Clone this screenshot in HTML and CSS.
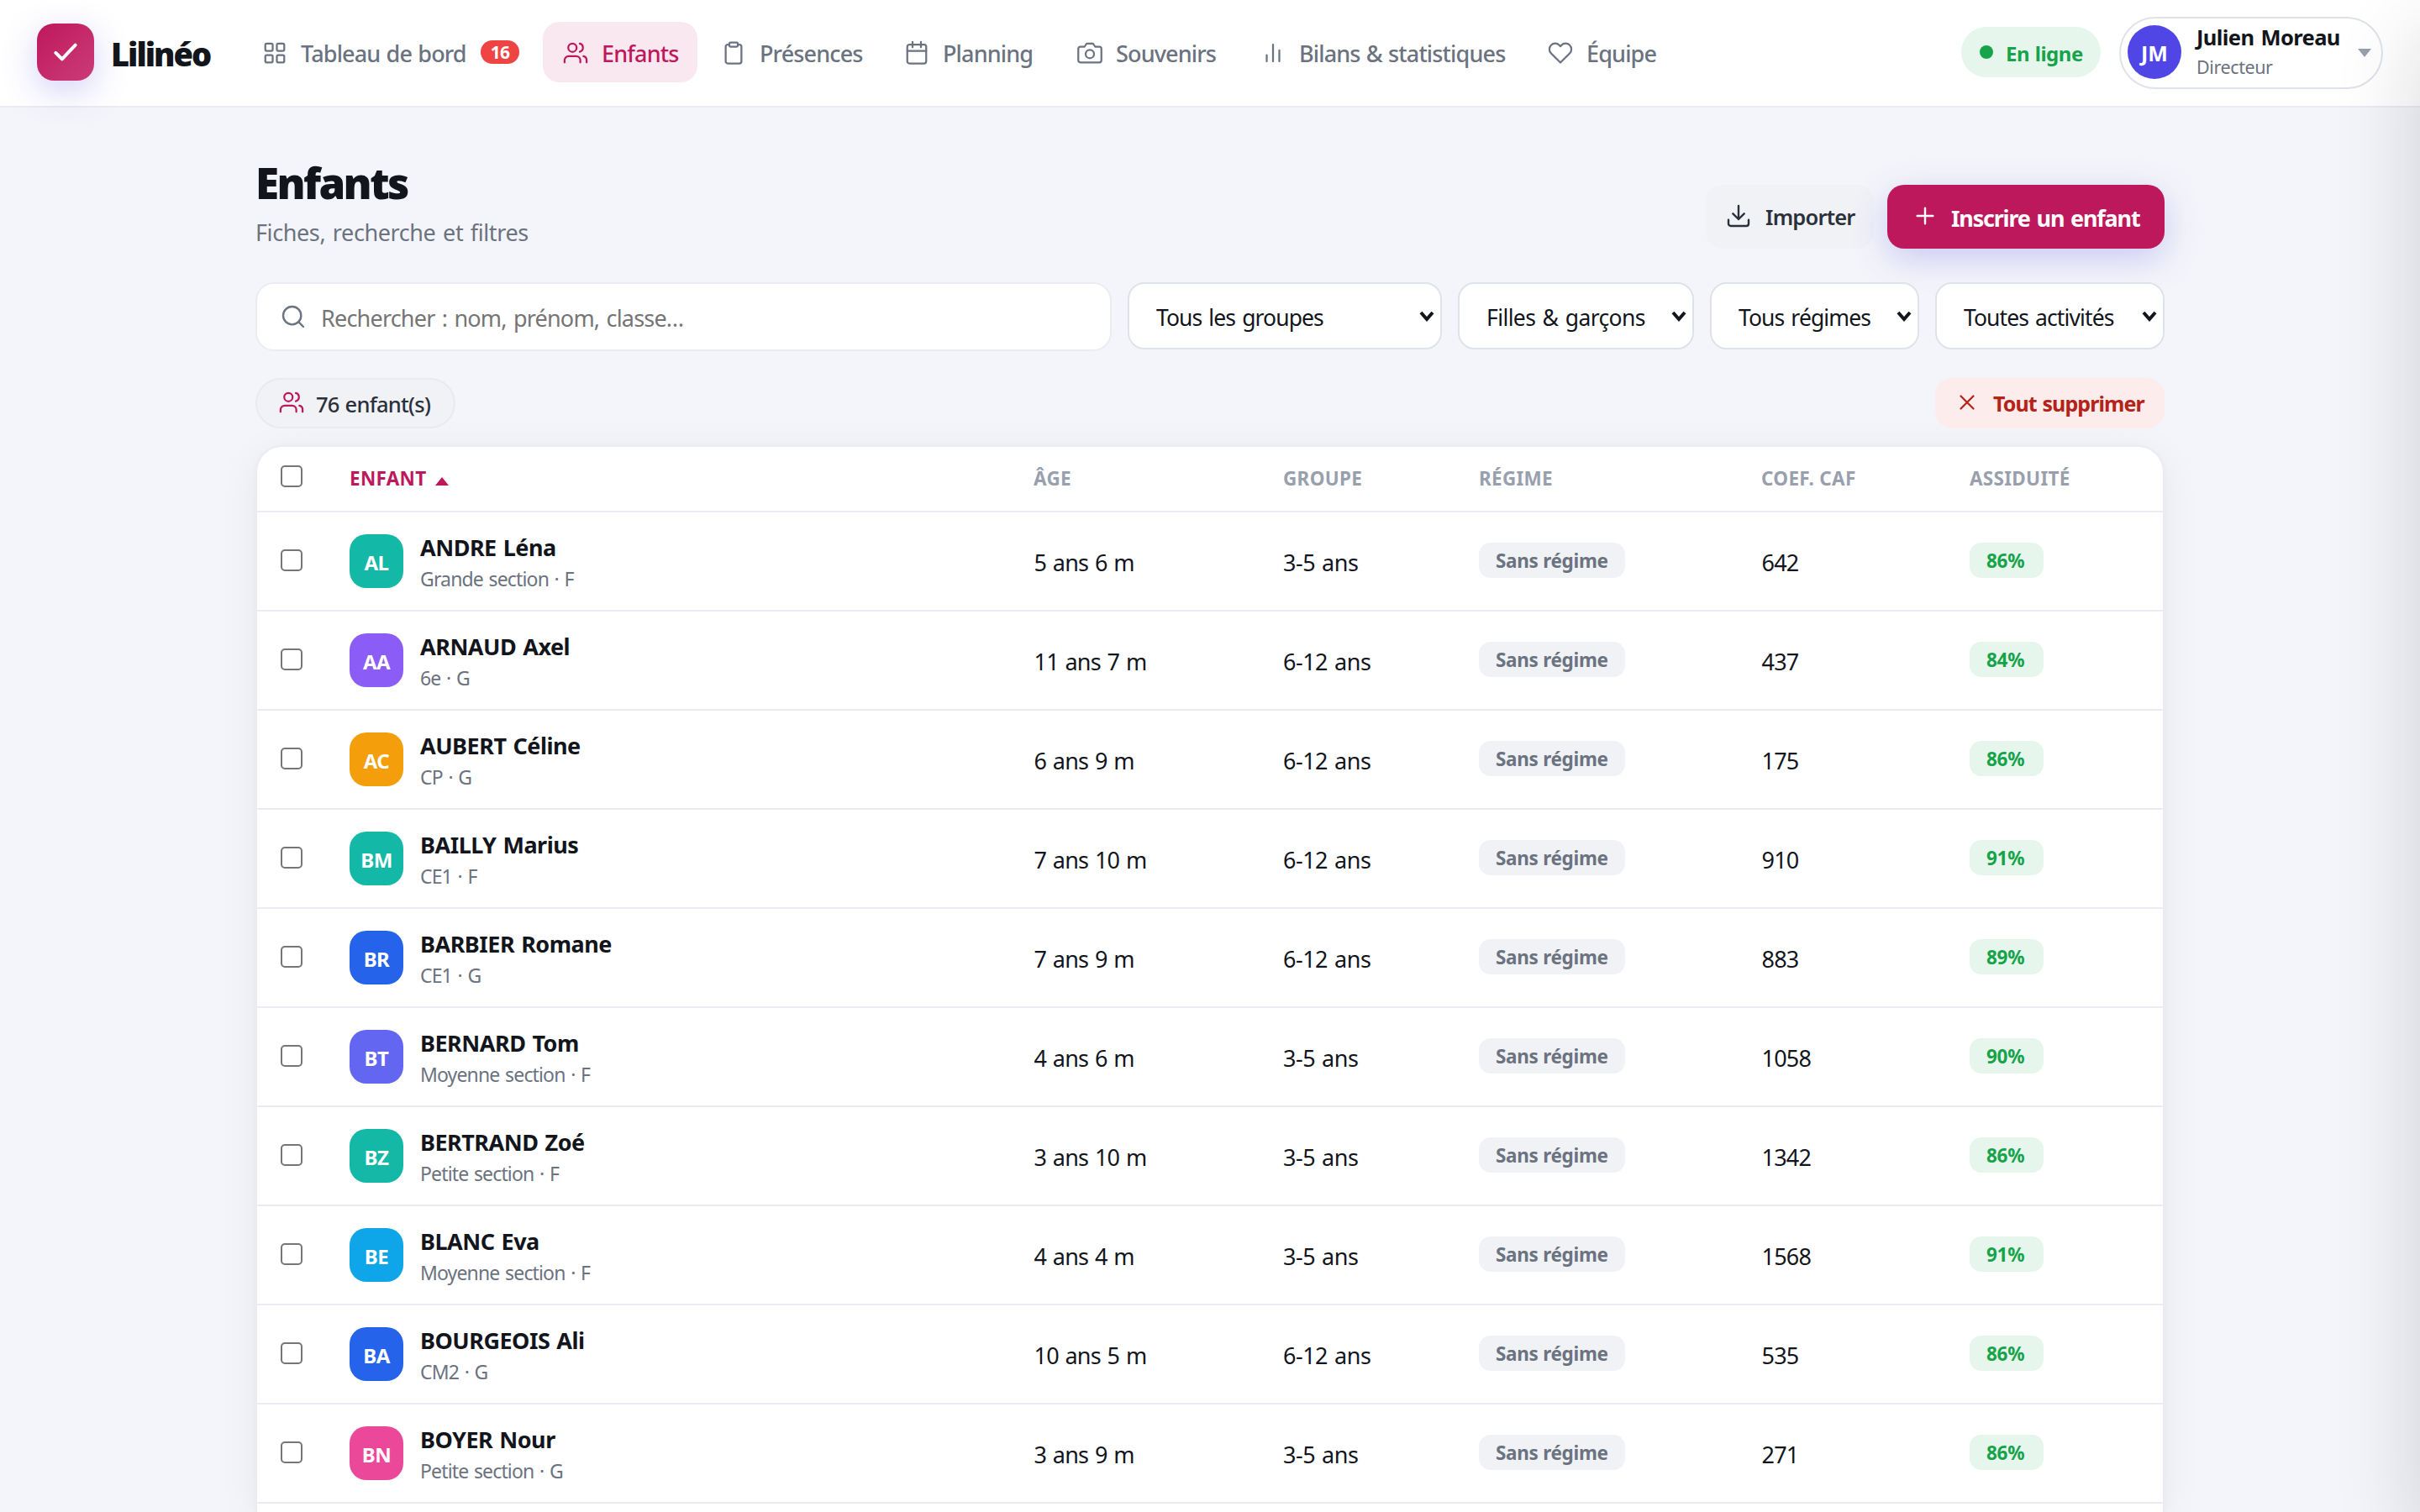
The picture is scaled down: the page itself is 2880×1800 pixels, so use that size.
FILE: index.html
```html
<!DOCTYPE html>
<html lang="fr">
<head>
<meta charset="utf-8">
<title>Lilinéo – Enfants</title>
<link rel="stylesheet" href="styles.css">
</head>
<body>
<svg class="sprite" aria-hidden="true">
  <symbol id="i-users" viewBox="0 0 24 24"><circle cx="9" cy="7" r="4"/><path d="M1.5 21v-2a4 4 0 0 1 4-4h7a4 4 0 0 1 4 4v2M22.5 21v-2a4 4 0 0 0-3-3.87M16 3.13a4 4 0 0 1 0 7.75"/></symbol>
</svg>
<header class="topbar">
  <div class="logo"><svg class="icon" viewBox="0 0 24 24"><path d="M5 12.5l4.5 4.5L19 7"/></svg></div>
  <div class="brand">Lilinéo</div>
  <nav class="nav">
    <a class="nav-item n1"><svg class="icon" viewBox="0 0 24 24"><rect x="3" y="3" width="7" height="7" rx="1.2"/><rect x="14" y="3" width="7" height="7" rx="1.2"/><rect x="3" y="14" width="7" height="7" rx="1.2"/><rect x="14" y="14" width="7" height="7" rx="1.2"/></svg><span>Tableau de bord</span><b class="badge">16</b></a>
    <a class="nav-item n2 active"><svg class="icon" viewBox="0 0 24 24"><use href="#i-users"/></svg><span>Enfants</span></a>
    <a class="nav-item n3"><svg class="icon" viewBox="0 0 24 24"><rect x="8" y="2" width="8" height="4" rx="1"/><path d="M16 4h1.500a2 2 0 0 1 2 2v14a2 2 0 0 1-2 2h-11a2 2 0 0 1-2-2V6a2 2 0 0 1 2-2H8"/></svg><span>Présences</span></a>
    <a class="nav-item n4"><svg class="icon" viewBox="0 0 24 24"><rect x="3" y="4" width="18" height="18" rx="2"/><path d="M8 1.500v5M16 1.500v5M3 10h18"/></svg><span>Planning</span></a>
    <a class="nav-item n5"><svg class="icon" viewBox="0 0 24 24"><path d="M23 19a2 2 0 0 1-2 2H3a2 2 0 0 1-2-2V8a2 2 0 0 1 2-2h4l2-3h6l2 3h4a2 2 0 0 1 2 2z"/><circle cx="12" cy="13" r="4"/></svg><span>Souvenirs</span></a>
    <a class="nav-item n6"><svg class="icon" viewBox="0 0 24 24"><path d="M12 20V4M18 20V9.500M6 20v-6"/></svg><span>Bilans &amp; statistiques</span></a>
    <a class="nav-item n7"><svg class="icon" viewBox="0 0 24 24"><path d="M20.840 4.610a5.500 5.500 0 0 0-7.780 0L12 5.670l-1.060-1.060a5.500 5.500 0 0 0-7.780 7.780L12 21.230l8.840-8.840a5.500 5.500 0 0 0 0-7.780z"/></svg><span>Équipe</span></a>
  </nav>
  <div class="status"><i class="dot"></i><span>En ligne</span></div>
  <div class="profile">
    <div class="profile-avatar">JM</div>
    <div class="profile-info"><div class="profile-name">Julien Moreau</div><div class="profile-role">Directeur</div></div>
    <i class="caret"></i>
  </div>
</header>

<main class="page">
  <section class="page-head">
    <div><h1>Enfants</h1><p class="subtitle">Fiches, recherche et filtres</p></div>
    <div class="actions">
      <button class="btn btn-soft"><svg class="icon" viewBox="0 0 24 24"><path d="M21 15.500V19a2 2 0 0 1-2 2H5a2 2 0 0 1-2-2v-3.500M7 10l5 5 5-5M12 15V3"/></svg><span>Importer</span></button>
      <button class="btn btn-primary"><svg class="icon" viewBox="0 0 24 24"><path d="M12 5v14M5 12h14"/></svg><span>Inscrire un enfant</span></button>
    </div>
  </section>

  <section class="filters">
    <div class="search"><svg class="icon" viewBox="0 0 24 24"><circle cx="11" cy="11" r="8"/><path d="M21 21l-4.350-4.350"/></svg><span>Rechercher : nom, prénom, classe…</span></div>
    <div class="select s1"><span>Tous les groupes</span><svg class="chevron" viewBox="0 0 18 14"><path d="M2 3l7 8 7-8"/></svg></div>
    <div class="select s2"><span>Filles &amp; garçons</span><svg class="chevron" viewBox="0 0 18 14"><path d="M2 3l7 8 7-8"/></svg></div>
    <div class="select s3"><span>Tous régimes</span><svg class="chevron" viewBox="0 0 18 14"><path d="M2 3l7 8 7-8"/></svg></div>
    <div class="select s4"><span>Toutes activités</span><svg class="chevron" viewBox="0 0 18 14"><path d="M2 3l7 8 7-8"/></svg></div>
  </section>

  <section class="summary">
    <div class="count"><svg class="icon" viewBox="0 0 24 24"><use href="#i-users"/></svg><span>76 enfant(s)</span></div>
    <button class="btn-danger"><svg class="icon" viewBox="0 0 24 24"><path d="M18 6L6 18M6 6l12 12"/></svg><span>Tout supprimer</span></button>
  </section>

  <section class="card">
    <table class="table">
      <colgroup><col class="c1"><col class="c2"><col class="c3"><col class="c4"><col class="c5"><col class="c6"><col class="c7"></colgroup>
      <thead><tr><th><i class="check"></i></th><th class="sorted">ENFANT<i class="sort"></i></th><th>ÂGE</th><th>GROUPE</th><th>RÉGIME</th><th>COEF. CAF</th><th>ASSIDUITÉ</th></tr></thead>
      <tbody>
        <tr><td><i class="check"></i></td><td><div class="child"><div class="avatar teal">AL</div><div><div class="name">ANDRE Léna</div><div class="meta">Grande section · F</div></div></div></td><td class="val">5 ans 6 m</td><td class="val">3-5 ans</td><td><span class="tag">Sans régime</span></td><td class="val">642</td><td><span class="tag good">86%</span></td></tr>
        <tr><td><i class="check"></i></td><td><div class="child"><div class="avatar violet">AA</div><div><div class="name">ARNAUD Axel</div><div class="meta">6e · G</div></div></div></td><td class="val">11 ans 7 m</td><td class="val">6-12 ans</td><td><span class="tag">Sans régime</span></td><td class="val">437</td><td><span class="tag good">84%</span></td></tr>
        <tr><td><i class="check"></i></td><td><div class="child"><div class="avatar amber">AC</div><div><div class="name">AUBERT Céline</div><div class="meta">CP · G</div></div></div></td><td class="val">6 ans 9 m</td><td class="val">6-12 ans</td><td><span class="tag">Sans régime</span></td><td class="val">175</td><td><span class="tag good">86%</span></td></tr>
        <tr><td><i class="check"></i></td><td><div class="child"><div class="avatar teal">BM</div><div><div class="name">BAILLY Marius</div><div class="meta">CE1 · F</div></div></div></td><td class="val">7 ans 10 m</td><td class="val">6-12 ans</td><td><span class="tag">Sans régime</span></td><td class="val">910</td><td><span class="tag good">91%</span></td></tr>
        <tr><td><i class="check"></i></td><td><div class="child"><div class="avatar blue">BR</div><div><div class="name">BARBIER Romane</div><div class="meta">CE1 · G</div></div></div></td><td class="val">7 ans 9 m</td><td class="val">6-12 ans</td><td><span class="tag">Sans régime</span></td><td class="val">883</td><td><span class="tag good">89%</span></td></tr>
        <tr><td><i class="check"></i></td><td><div class="child"><div class="avatar indigo">BT</div><div><div class="name">BERNARD Tom</div><div class="meta">Moyenne section · F</div></div></div></td><td class="val">4 ans 6 m</td><td class="val">3-5 ans</td><td><span class="tag">Sans régime</span></td><td class="val">1058</td><td><span class="tag good">90%</span></td></tr>
        <tr><td><i class="check"></i></td><td><div class="child"><div class="avatar teal">BZ</div><div><div class="name">BERTRAND Zoé</div><div class="meta">Petite section · F</div></div></div></td><td class="val">3 ans 10 m</td><td class="val">3-5 ans</td><td><span class="tag">Sans régime</span></td><td class="val">1342</td><td><span class="tag good">86%</span></td></tr>
        <tr><td><i class="check"></i></td><td><div class="child"><div class="avatar sky">BE</div><div><div class="name">BLANC Eva</div><div class="meta">Moyenne section · F</div></div></div></td><td class="val">4 ans 4 m</td><td class="val">3-5 ans</td><td><span class="tag">Sans régime</span></td><td class="val">1568</td><td><span class="tag good">91%</span></td></tr>
        <tr><td><i class="check"></i></td><td><div class="child"><div class="avatar blue">BA</div><div><div class="name">BOURGEOIS Ali</div><div class="meta">CM2 · G</div></div></div></td><td class="val">10 ans 5 m</td><td class="val">6-12 ans</td><td><span class="tag">Sans régime</span></td><td class="val">535</td><td><span class="tag good">86%</span></td></tr>
        <tr><td><i class="check"></i></td><td><div class="child"><div class="avatar pink">BN</div><div><div class="name">BOYER Nour</div><div class="meta">Petite section · G</div></div></div></td><td class="val">3 ans 9 m</td><td class="val">3-5 ans</td><td><span class="tag">Sans régime</span></td><td class="val">271</td><td><span class="tag good">86%</span></td></tr>
      </tbody>
    </table>
  </section>
</main>
<aside class="drawer"></aside>
</body>
</html>
```
FILE: styles.css
```css
* { box-sizing: border-box; }
body {
  margin: 0;
  height: 1800px;
  overflow: hidden;
  background: #f4f5fa;
  color: #12151c;
  font-family: "Noto Sans", "Open Sans", sans-serif;
  font-size: 27px;
}
h1, p { margin: 0; }
button { border: 0; font-family: inherit; padding: 0; }
i { font-style: normal; }
.sprite { display: none; }
.icon {
  flex: none;
  width: 30px;
  height: 30px;
  fill: none;
  stroke: currentColor;
  stroke-width: 1.8;
  stroke-linecap: round;
  stroke-linejoin: round;
}

/* Top bar */
.topbar {
  display: flex;
  align-items: center;
  height: 128px;
  padding: 0 44px;
  background: #fff;
  border-bottom: 2px solid #ebecf1;
}
.logo {
  display: flex;
  align-items: center;
  justify-content: center;
  flex: none;
  width: 68px;
  height: 68px;
  margin-top: -2px;
  border-radius: 20px;
  color: #fff;
  background: linear-gradient(135deg, #be185d, #cb3c77);
  box-shadow: 0 12px 40px rgba(79, 70, 229, .25);
}
.logo .icon { width: 40px; height: 40px; stroke-width: 2.4; }
.brand {
  width: 156px;
  margin-left: 20px;
  font-size: 38px;
  font-weight: 900;
  line-height: 50px;
  padding-top: 1px;
  letter-spacing: -2px;
}
.nav { display: flex; flex: 1; margin-top: -2px; }
.nav-item {
  display: flex;
  align-items: center;
  flex: none;
  height: 72px;
  padding-left: 24px;
  border-radius: 20px;
  color: #6b7280;
  font-weight: 500;
  letter-spacing: -.85px;
  word-spacing: 1px;
  white-space: nowrap;
}
.nav-item .icon { margin-top: 2px; }
.nav-item span { margin-left: 16px; padding-top: 3px; }
.n1 { width: 354px; margin-right: 4px; }
.n2 { width: 184px; margin-right: 4px; }
.n3 { width: 218px; }
.n4 { width: 206px; }
.n5 { width: 218px; }
.n6 { width: 342px; }
.nav-item.active { color: #be185d; background: #f9e8ef; }
.badge {
  width: 46px;
  height: 28px;
  margin-left: auto;
  margin-right: 24px;
  border-radius: 14px;
  background: #ef4444;
  color: #fff;
  font-size: 21px;
  line-height: 28px;
  letter-spacing: -.8px;
  text-align: center;
}
.status {
  display: flex;
  align-items: center;
  width: 166px;
  height: 60px;
  margin: -2px 22px 0 0;
  padding-left: 22px;
  border-radius: 30px;
  background: #e6f6ed;
  color: #16a34a;
  font-size: 24px;
  font-weight: 700;
  letter-spacing: -.5px;
  word-spacing: 1px;
}
.status span { padding-top: 2px; }
.dot { width: 16px; height: 16px; margin-right: 15px; border-radius: 50%; background: #16a34a; }
.profile {
  display: flex;
  align-items: center;
  width: 314px;
  height: 86px;
  padding: 0 12px 0 8px;
  border: 2px solid #dfe2e8;
  border-radius: 43px;
}
.profile-avatar {
  width: 64px;
  height: 64px;
  margin-top: -2px;
  border-radius: 50%;
  background: #4f46e5;
  color: #fff;
  font-size: 25px;
  font-weight: 700;
  line-height: 67px;
  text-align: center;
}
.profile-info { flex: 1; margin: -2px 0 0 18px; line-height: 35px; white-space: nowrap; }
.profile-name { font-size: 25.5px; font-weight: 700; letter-spacing: -.6px; word-spacing: 2px; }
.profile-role { color: #6b7280; font-size: 21.500px; letter-spacing: -.4px; }
.caret { border: 8px solid transparent; border-top: 10px solid #98a0ae; border-bottom: 0; }

/* Page heading */
.page { width: 2272px; margin: 0 auto; padding-top: 56px; }
.page-head { display: flex; justify-content: space-between; align-items: flex-end; height: 112px; }
h1 { font-size: 51px; font-weight: 900; line-height: 64px; letter-spacing: -2.6px; }
.subtitle { margin-top: 8px; color: #6b7280; line-height: 39px; letter-spacing: -.4px; word-spacing: 2px; }
.actions { display: flex; gap: 16px; }
.btn { display: flex; align-items: center; height: 76px; border-radius: 20px; }
.btn .icon { width: 32px; height: 32px; margin-top: -2px; }
.btn-soft { width: 200px; padding-left: 23px; background: #f1f2f6; color: #2a303c; font-size: 25.500px; font-weight: 600; letter-spacing: -.8px; }
.btn-soft span { margin-left: 16px; }
.btn-primary {
  width: 330px;
  padding-left: 29px;
  background: #be185d;
  color: #fff;
  font-size: 27px;
  font-weight: 700;
  letter-spacing: -1.2px;
  word-spacing: 2px;
  box-shadow: 0 12px 40px rgba(79, 70, 229, .25);
}
.btn-primary span { margin: 3px 0 0 15px; }

/* Filters */
.filters { display: flex; gap: 19px; height: 82px; margin-top: 40px; }
.search {
  display: flex;
  align-items: center;
  flex: 1;
  padding-left: 27px;
  border: 2px solid #eaecf1;
  border-radius: 22px;
  background: #fff;
  color: #757575;
  letter-spacing: -.8px;
  word-spacing: 2px;
}
.search .icon { width: 32px; height: 32px; color: #6b7280; }
.search span { margin-left: 17px; padding-top: 2px; }
.select {
  display: flex;
  align-items: center;
  justify-content: space-between;
  height: 80px;
  padding: 0 7px 0 32px;
  border: 2px solid #dfe2e8;
  border-radius: 20px;
  background: #fff;
  font-size: 26.500px;
  letter-spacing: -.9px;
  word-spacing: 2px;
  white-space: nowrap;
}
.select span { padding-top: 4px; }
.s1 { width: 374px; }
.s2 { width: 281px; letter-spacing: -.6px; }
.s3 { width: 249px; }
.s4 { width: 273px; }
.chevron { width: 18px; height: 14px; fill: none; stroke: #12151c; stroke-width: 4; }

/* Count and bulk delete */
.summary { display: flex; justify-content: space-between; height: 60px; margin: 32px 0 20px; }
.count {
  display: flex;
  align-items: center;
  width: 238px;
  padding-left: 26px;
  border: 2px solid #e9eaee;
  border-radius: 30px;
  background: #f1f2f5;
  color: #2a303c;
  font-size: 25.500px;
  font-weight: 500;
  letter-spacing: -.75px;
  word-spacing: 1px;
}
.count .icon { color: #be185d; margin-top: -3px; }
.count span { margin-left: 14px; padding-top: 1px; }
.btn-danger {
  display: flex;
  align-items: center;
  width: 273px;
  padding-left: 23px;
  border-radius: 20px;
  background: #fdecec;
  color: #b42318;
  font-size: 25px;
  font-weight: 700;
  letter-spacing: -.9px;
  word-spacing: 1px;
}
.btn-danger .icon { margin-top: -2px; }
.btn-danger span { margin: 0 0 0 16px; }

/* Children table */
.card {
  height: 1270px;
  overflow: hidden;
  border: 2px solid #ebecf1;
  border-bottom: 0;
  border-radius: 32px 32px 0 0;
  background: #fff;
  box-shadow: 0 8px 48px rgba(17, 24, 39, .06), 0 2px 6px rgba(17, 24, 39, .03);
}
.table { width: 2268px; table-layout: fixed; border-collapse: separate; border-spacing: 0; }
.c1 { width: 82px; }
.c2 { width: 814px; }
.c3 { width: 297px; }
.c4 { width: 233px; }
.c5 { width: 336px; }
.c6 { width: 248px; }
.c7 { width: 258px; }
th, td { padding: 0 0 0 28px; border-bottom: 2px solid #ebecf1; text-align: left; vertical-align: middle; white-space: nowrap; }
th { height: 78px; padding-bottom: 1px; color: #98a0ae; font-size: 22.500px; font-weight: 700; letter-spacing: .3px; }
td { height: 118px; }
.sorted { color: #be185d; }
.sort { display: inline-block; margin-left: 11px; border: 8px solid transparent; border-bottom: 10px solid #be185d; border-top: 0; }
.check { display: block; width: 26px; height: 26px; margin-top: -3px; border: 2px solid #767676; border-radius: 5px; }
th .check { margin-top: -5px; }
.child { display: flex; align-items: center; gap: 20px; }
.avatar {
  width: 64px;
  height: 64px;
  border-radius: 20px;
  color: #fff;
  font-size: 24px;
  font-weight: 700;
  line-height: 67px;
  letter-spacing: -.5px;
  text-align: center;
}
.name { padding-top: 4px; font-weight: 700; line-height: 38px; letter-spacing: -.5px; word-spacing: 1.5px; }
.meta { color: #6b7280; font-size: 23px; line-height: 36px; letter-spacing: -.85px; word-spacing: 1.5px; }
.val { padding-top: 3px; padding-left: 28.500px; letter-spacing: -.8px; word-spacing: 1.5px; }
.val:nth-child(4) { padding-left: 28px; letter-spacing: -.5px; }
.tag {
  display: block;
  width: fit-content;
  min-width: 88px;
  height: 42px;
  margin-top: -2px;
  padding: 0 20px;
  border-radius: 14px;
  background: #f1f2f6;
  color: #6b7280;
  font-size: 22.500px;
  font-weight: 700;
  line-height: 43px;
  letter-spacing: -.3px;
}
.tag.good { background: #e6f6ed; color: #16a34a; }
.teal { background: #14b8a6; }
.violet { background: #8b5cf6; }
.amber { background: #f59e0b; }
.blue { background: #2563eb; }
.indigo { background: #6366f1; }
.sky { background: #0ea5e9; }
.pink { background: #ec4899; }

/* Closed side panel: only its shadow reaches the viewport */
.drawer {
  position: fixed;
  top: 0;
  left: 100%;
  width: 900px;
  height: 100%;
  box-shadow: 0 40px 96px rgba(17, 20, 28, .16);
}
```
